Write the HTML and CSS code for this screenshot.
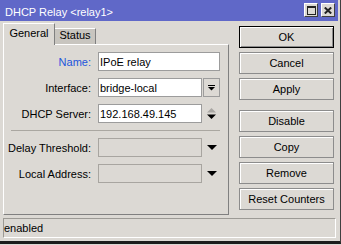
FILE: index.html
```html
<!DOCTYPE html>
<html>
<head>
<meta charset="utf-8">
<link rel="stylesheet" href="styles.css">
</head>
<body>
<div class="window">
  <div class="titlebar">
    <span class="title">DHCP Relay &lt;relay1&gt;</span>
    <div class="tb-btns">
      <span class="tb-btn"><svg width="9" height="9" viewBox="0 0 9 9"><rect x="0.5" y="0.5" width="8" height="8" fill="none" stroke="#222"/><rect x="0" y="0" width="9" height="2" fill="#222"/></svg></span>
      <span class="tb-btn"><svg width="8" height="7" viewBox="0 0 8 7"><path d="M0.8 0.5 L7.2 6.5 M7.2 0.5 L0.8 6.5" stroke="#222" stroke-width="2" fill="none"/></svg></span>
    </div>
  </div>
  <div class="main">
    <div class="left">
      <div class="tabs">
        <div class="tab active">General</div>
        <div class="tab inactive">Status</div>
      </div>
      <div class="panel">
        <div class="row">
          <div class="label blue">Name:</div>
          <div class="field wide">IPoE relay</div>
        </div>
        <div class="row">
          <div class="label">Interface:</div>
          <div class="field narrow">bridge-local</div>
          <div class="dd-btn"><svg width="7" height="6" viewBox="0 0 7 6"><rect x="0" y="0" width="7" height="1" fill="#000"/><polygon points="0,2 7,2 3.5,5.5" fill="#000"/></svg></div>
        </div>
        <div class="row">
          <div class="label">DHCP Server:</div>
          <div class="field narrow">192.168.49.145</div>
          <div class="arrows"><svg width="9" height="11" viewBox="0 0 9 11"><polygon points="0,4.5 9,4.5 4.5,0" fill="#a9a7a3"/><polygon points="0,6.5 9,6.5 4.5,11" fill="#000"/></svg></div>
        </div>
        <div class="sep"></div>
        <div class="row">
          <div class="label">Delay Threshold:</div>
          <div class="field narrow disabled"></div>
          <div class="arrows"><svg width="10" height="5" viewBox="0 0 10 5"><polygon points="0,0 10,0 5,5" fill="#000"/></svg></div>
        </div>
        <div class="row">
          <div class="label">Local Address:</div>
          <div class="field narrow disabled"></div>
          <div class="arrows"><svg width="10" height="5" viewBox="0 0 10 5"><polygon points="0,0 10,0 5,5" fill="#000"/></svg></div>
        </div>
      </div>
    </div>
    <div class="buttons">
      <div class="btn default">OK</div>
      <div class="btn">Cancel</div>
      <div class="btn">Apply</div>
      <div class="btn spaced">Disable</div>
      <div class="btn">Copy</div>
      <div class="btn">Remove</div>
      <div class="btn">Reset Counters</div>
    </div>
  </div>
  <div class="statusbar">enabled</div>
</div>
</body>
</html>
```
FILE: styles.css
```css
* { box-sizing: border-box; }
html, body { margin: 0; padding: 0; }
body {
  width: 341px;
  height: 245px;
  background: #dcd9d4;
  font-family: "Liberation Sans", Arial, sans-serif;
  font-size: 11px;
  color: #000;
  overflow: hidden;
}
.window {
  width: 341px;
  height: 244px;
  border-right: 1px solid #404040;
  border-bottom: 3px solid #1c1c1c;
  display: flex;
  flex-direction: column;
}
.titlebar {
  height: 21px;
  width: 338px;
  flex: none;
  background: #6068c8;
  color: #fff;
  display: flex;
  justify-content: space-between;
  align-items: flex-start;
  padding: 0 3px 0 5px;
}
.title { line-height: 21px; padding-top: 2px; white-space: nowrap; }
.tb-btns { display: flex; gap: 3px; margin-top: 3px; }
.tb-btn {
  width: 14px;
  height: 14px;
  background: #dcd9d4;
  border: 1px solid;
  border-color: #fff #404040 #404040 #fff;
  display: flex;
  align-items: center;
  justify-content: center;
}
.main { display: flex; height: 197px; flex: none; padding-left: 3px; }
.left { width: 226px; padding-top: 2px; display: flex; flex-direction: column; }
.tabs { display: flex; align-items: flex-end; height: 21px; }
.tab { text-align: center; white-space: nowrap; }
.tab.active {
  width: 52px;
  height: 22px;
  margin-bottom: -1px;
  border-top: 1px solid #fff;
  border-left: 1px solid #fff;
  border-right: 1px solid #808080;
  background: #dcd9d4;
  position: relative;
  z-index: 1;
  line-height: 18px;
}
.tab.inactive {
  width: 41px;
  height: 16px;
  border-top: 1px solid #fff;
  border-right: 1px solid #808080;
  background: #c8c5bf;
  line-height: 13px;
}
.panel {
  height: 171px;
  border-top: 1px solid #fff;
  border-left: 1px solid #fff;
  border-right: 1px solid #808080;
  border-bottom: 1px solid #808080;
  padding-top: 7px;
}
.row { display: flex; align-items: flex-start; height: 19px; margin-bottom: 7px; }
.label { width: 87px; margin-right: 7px; text-align: right; line-height: 20px; white-space: nowrap; }
.label.blue { color: #2255dd; }
.field {
  height: 19px;
  border: 1px solid #9c9c9c;
  background: #fff;
  padding: 1px 0 0 1px;
  line-height: 17px;
  white-space: nowrap;
}
.field.wide { width: 122px; }
.field.narrow { width: 104px; }
.field.disabled { background: #dcd9d4; border-color: #a8a5a0; }
.dd-btn {
  width: 17px;
  height: 19px;
  margin-left: 1px;
  border: 1px solid #9c9c9c;
  display: flex;
  align-items: center;
  justify-content: center;
}
.arrows {
  width: 18px;
  height: 19px;
  padding-left: 1px;
  display: flex;
  align-items: center;
  justify-content: center;
}
.sep { width: 209px; height: 1px; background: #aaa7a1; margin: 2px 0 7px 7px; }
.buttons {
  margin-left: 10px;
  width: 95px;
  padding-top: 5px;
  display: flex;
  flex-direction: column;
  gap: 4px;
}
.btn {
  height: 22px;
  border: 1px solid #8c8c8c;
  box-shadow: inset 1px 1px #fff;
  text-align: center;
  line-height: 20px;
  white-space: nowrap;
}
.btn.default {
  border-color: #000;
  box-shadow: inset 1px 1px #fff, inset -1px -1px #8c8c8c;
}
.btn.spaced { margin-top: 6px; }
.statusbar {
  margin-left: 3px;
  width: 333px;
  height: 20px;
  flex: none;
  border: 1px solid;
  border-color: #9c9a95 #fff #fff #9c9a95;
  padding-top: 1px;
  line-height: 17px;
}
```
